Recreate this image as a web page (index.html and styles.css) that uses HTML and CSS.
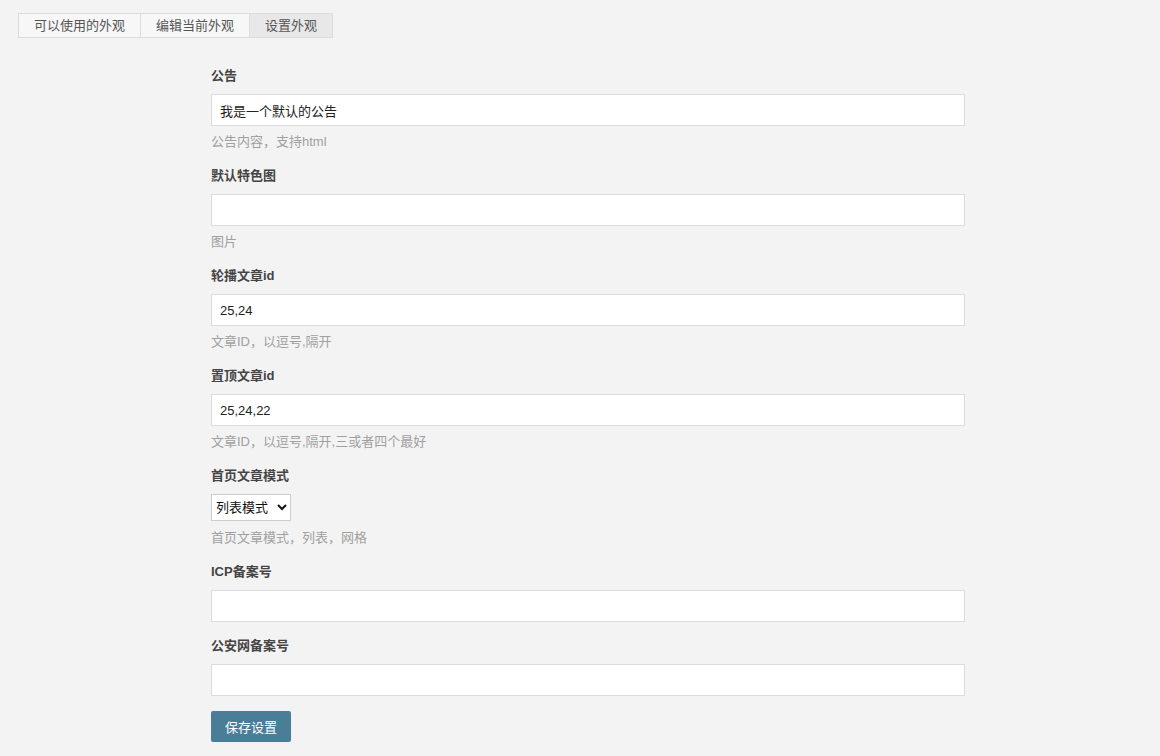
FILE: index.html
```html
<!DOCTYPE html>
<html lang="zh-CN">

<head>
    <meta charset="UTF-8">
    <meta name="viewport" content="width=device-width, initial-scale=1.0">
    <title>设置外观</title>
    <link rel="stylesheet" href="styles.css">
</head>

<body>
    <div class="tabs">
        <a href="javascript:;" class="tab">可以使用的外观</a>
        <a href="javascript:;" class="tab">编辑当前外观</a>
        <a href="javascript:;" class="tab active">设置外观</a>
    </div>

    <form class="setting">
        <div class="group">
            <label>公告</label>
            <input type="text" value="我是一个默认的公告">
            <p class="desc">公告内容，支持html</p>
        </div>
        <div class="group">
            <label>默认特色图</label>
            <input type="text" value="">
            <p class="desc">图片</p>
        </div>
        <div class="group">
            <label>轮播文章id</label>
            <input type="text" value="25,24">
            <p class="desc">文章ID，以逗号,隔开</p>
        </div>
        <div class="group">
            <label>置顶文章id</label>
            <input type="text" value="25,24,22">
            <p class="desc">文章ID，以逗号,隔开,三或者四个最好</p>
        </div>
        <div class="group">
            <label>首页文章模式</label>
            <select>
                <option>列表模式</option>
                <option>网格模式</option>
            </select>
            <p class="desc">首页文章模式，列表，网格</p>
        </div>
        <div class="group">
            <label>ICP备案号</label>
            <input type="text" value="">
        </div>
        <div class="group">
            <label>公安网备案号</label>
            <input type="text" value="">
        </div>
        <button type="button" class="btn">保存设置</button>
    </form>
</body>

</html>
```

FILE: styles.css
```css
body {
    margin: 0;
    padding: 0;
    background: #f4f3f3;
    font-family: "Liberation Sans", "Noto Sans CJK SC", sans-serif;
    font-size: 13px;
    color: #444;
}
.tabs {
    display: flex;
    padding: 13px 0 0 18px;
}
.tab {
    display: block;
    height: 23px;
    line-height: 23px;
    padding: 0 15px;
    border: 1px solid #dcdcdc;
    background: #f7f7f7;
    color: #555;
    text-decoration: none;
}
.tab + .tab {
    border-left: none;
}
.tab.active {
    background: #e8e8e8;
}
.setting {
    width: 754px;
    margin: 0 0 0 211px;
    padding-top: 29px;
}
.group {
    margin-bottom: 15px;
}
.group label {
    display: block;
    line-height: 18px;
    font-weight: bold;
    color: #444;
    margin-bottom: 9px;
}
.group input {
    display: block;
    box-sizing: border-box;
    width: 100%;
    height: 32px;
    padding: 0 8px;
    border: 1px solid #dcdcdc;
    background: #fff;
    font-family: inherit;
    font-size: 13px;
    color: #222;
    outline: none;
}
.group select {
    display: block;
    width: 80px;
    height: 27px;
    border: 1px solid #ccc;
    background: #fff;
    font-family: inherit;
    font-size: 13px;
    color: #111;
}
.desc {
    margin: 7px 0 0;
    line-height: 18px;
    font-size: 13px;
    color: #a0a0a0;
    padding-bottom: 1px;
}
.group select + .desc {
    margin-top: 8px;
}
.btn {
    display: block;
    width: 80px;
    height: 31px;
    border: none;
    border-radius: 2px;
    background: #4a7d97;
    color: #fff;
    font-family: inherit;
    font-size: 13px;
    cursor: pointer;
}
.btn:hover {
    background: #3f6e86;
}
```
